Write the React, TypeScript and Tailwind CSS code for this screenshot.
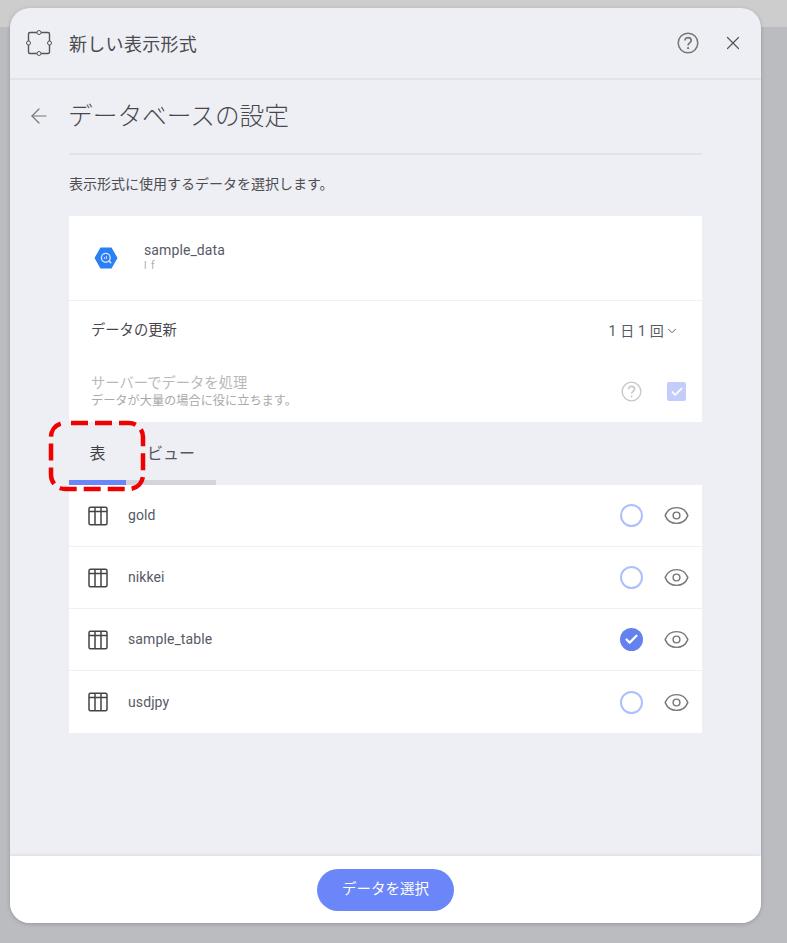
import { ArrowLeft, X, ChevronDown, Eye, Check } from "lucide-react";

const FONT = "font-['Roboto','Noto_Sans_CJK_JP',sans-serif]";

const tables = [
  { name: "gold", selected: false },
  { name: "nikkei", selected: false },
  { name: "sample_table", selected: true },
  { name: "usdjpy", selected: false },
];

function FrameIcon() {
  return (
    <svg width="26" height="26" viewBox="0 0 26 26" fill="none" stroke="#555" strokeWidth="1.4">
      <rect x="2.5" y="2.5" width="21" height="21" rx="1.5" />
      <circle cx="13" cy="2.5" r="2" fill="#eeeff4" strokeWidth="1" />
      <circle cx="13" cy="23.5" r="2" fill="#eeeff4" strokeWidth="1" />
      <circle cx="2.5" cy="13" r="2" fill="#eeeff4" strokeWidth="1" />
      <circle cx="23.5" cy="13" r="2" fill="#eeeff4" strokeWidth="1" />
    </svg>
  );
}

function HelpIcon({ color, size }: { color: string; size: number }) {
  return (
    <svg width={size} height={size} viewBox="0 0 22 22" fill="none" stroke={color} strokeWidth="1.5">
      <circle cx="11" cy="11" r="9.8" />
      <path d="M7.9 8.6c0-1.8 1.4-3 3.2-3s3.1 1.2 3.1 2.8c0 2.4-3.1 2.5-3.1 5" strokeWidth="1.7" />
      <circle cx="11.1" cy="16.2" r="1.1" fill={color} stroke="none" />
    </svg>
  );
}

function BigQueryIcon() {
  return (
    <svg width="24" height="22" viewBox="0 0 24 22">
      <path d="M6.5 0.5h11L23.5 11l-6 10.5h-11L0.5 11z" fill="#2a7ff5" />
      <circle cx="11.8" cy="10.8" r="4.4" fill="none" stroke="#cfe2ff" strokeWidth="1.4" />
      <path d="M14.5 13.5l2.6 2.6" stroke="#cfe2ff" strokeWidth="1.6" />
      <path d="M10.6 12V10.2M12.4 12V9" stroke="#cfe2ff" strokeWidth="1" />
    </svg>
  );
}

function TableIcon() {
  return (
    <svg width="20" height="20" viewBox="0 0 20 20" fill="none" stroke="#444" strokeWidth="1.5">
      <rect x="1" y="1.2" width="18" height="17.6" rx="1.5" />
      <path d="M1 5.4h18M7 1.2v17.6M13 1.2v17.6" />
    </svg>
  );
}

function TableRow({ name, selected, last }: { name: string; selected: boolean; last: boolean }) {
  return (
    <div className={`flex h-[62px] items-center pl-[19px] pr-[12px] ${last ? "" : "border-b border-[#eff0f5]"}`}>
      <TableIcon />
      <span className="ml-5 flex-1 text-[14px] tracking-[0.1px] text-[#555a66]">{name}</span>
      {selected ? (
        <span className="flex h-[23px] w-[23px] items-center justify-center rounded-full bg-[#6482ee]">
          <Check size={15} strokeWidth={3.5} className="text-white" />
        </span>
      ) : (
        <span className="h-[23px] w-[23px] rounded-full border-2 border-[#aebffb]" />
      )}
      <Eye size={27} strokeWidth={1.3} className="ml-[20px] text-[#777]" />
    </div>
  );
}

export default function App() {
  return (
    <div className={`relative h-[943px] w-[787px] overflow-hidden bg-[#bbbcc0] pl-2.5 pt-2 ${FONT}`}>
      {/* lighter strip behind the dialog */}
      <div className="absolute inset-x-0 top-0 h-[27px] bg-[#cdcdcd]" />

      <div className="relative flex h-[915px] w-[751px] flex-col overflow-hidden rounded-[20px] bg-[#eeeff4] shadow-[0_1px_4px_rgba(0,0,0,0.2)]">
        {/* Header */}
        <div className="flex h-[72px] shrink-0 items-center border-b-2 border-[#e2e3e8] pl-4 pr-[17px]">
          <FrameIcon />
          <span className="ml-[17px] flex-1 pt-[3px] text-[18px] tracking-[0.3px] text-[#4a4a4f]">新しい表示形式</span>
          <HelpIcon color="#777" size={22} />
          <X size={22} strokeWidth={1.3} className="ml-[23px] text-[#555]" />
        </div>

        {/* Title */}
        <div className="flex h-[73px] shrink-0 items-center pl-[17px]">
          <ArrowLeft size={24} strokeWidth={1.2} className="mb-[2px] text-[#777]" />
          <h1 className="ml-[17px] text-[24.7px] font-light text-[#47474c]">データベースの設定</h1>
        </div>

        <div className="ml-[59px] flex w-[633px] flex-col">
          <div className="h-0.5 bg-[#e2e3e8]" />
          <p className="mt-[19px] h-[42px] text-[14px] text-[#4d4d52]">表示形式に使用するデータを選択します。</p>

          {/* Source card */}
          <div className="bg-white">
            <div className="flex h-[85px] items-center border-b border-[#eff0f5] pl-[25px]">
              <BigQueryIcon />
              <div className="ml-[26px] flex flex-col pb-[2px]">
                <span className="text-[14px] leading-[17px] tracking-[0.1px] text-[#555a66]">sample_data</span>
                <span className="text-[10px] leading-[13px] tracking-[1px] text-[#aaa]">l f</span>
              </div>
            </div>
            <div className="flex h-[60px] items-center pl-[22px] pr-[23px]">
              <span className="flex-1 text-[14.3px] text-[#47474c]">データの更新</span>
              <span className="text-[14px] tracking-[0.2px] text-[#555a66]">1 日 1 回</span>
              <ChevronDown size={14} strokeWidth={1.6} className="ml-[1px] text-[#555]" />
            </div>
            <div className="flex h-[61px] items-center pl-[22px] pr-[16px]">
              <div className="flex flex-1 flex-col pb-[2px]">
                <span className="text-[14.3px] leading-[20px] text-[#b9b9bc]">サーバーでデータを処理</span>
                <span className="text-[12.2px] leading-[16px] text-[#a9a9ac]">データが大量の場合に役に立ちます。</span>
              </div>
              <HelpIcon color="#c9c9c9" size={21} />
              <span className="ml-[25px] flex h-[19px] w-[19px] items-center justify-center rounded-[2px] bg-[#c3cdfb]">
                <Check size={14} strokeWidth={3} className="text-white" />
              </span>
            </div>
          </div>

          {/* Tabs */}
          <div className="flex h-[63px]">
            <div className="flex w-[57px] items-center justify-center border-b-[5px] border-[#6b86f8] pt-[6px] text-[16px] text-[#3f3f44]">
              表
            </div>
            <div className="flex w-[90px] items-center justify-center border-b-[5px] border-[#d4d5da] pt-[6px] text-[16px] text-[#55565e]">
              ビュー
            </div>
          </div>

          {/* Tables */}
          <div className="bg-white">
            {tables.map((t, i) => (
              <TableRow key={t.name} name={t.name} selected={t.selected} last={i === tables.length - 1} />
            ))}
          </div>
        </div>

        {/* Footer */}
        <div className="mt-auto flex h-[67px] shrink-0 items-center justify-center bg-white shadow-[0_-1px_3px_rgba(0,0,0,0.08)]">
          <button className="flex h-[42px] w-[137px] items-center justify-center rounded-full bg-[#6b86f8] text-[14.5px] text-white">
            データを選択
          </button>
        </div>
      </div>

      {/* Red annotation over the tab */}
      <svg className="absolute left-[47px] top-[419px]" width="100" height="74" viewBox="0 0 100 74" fill="none">
        <rect x="4" y="4" width="92" height="66" rx="14" stroke="#f00000" strokeWidth="4.5" strokeDasharray="17 7" strokeDashoffset="-6" />
      </svg>
    </div>
  );
}
